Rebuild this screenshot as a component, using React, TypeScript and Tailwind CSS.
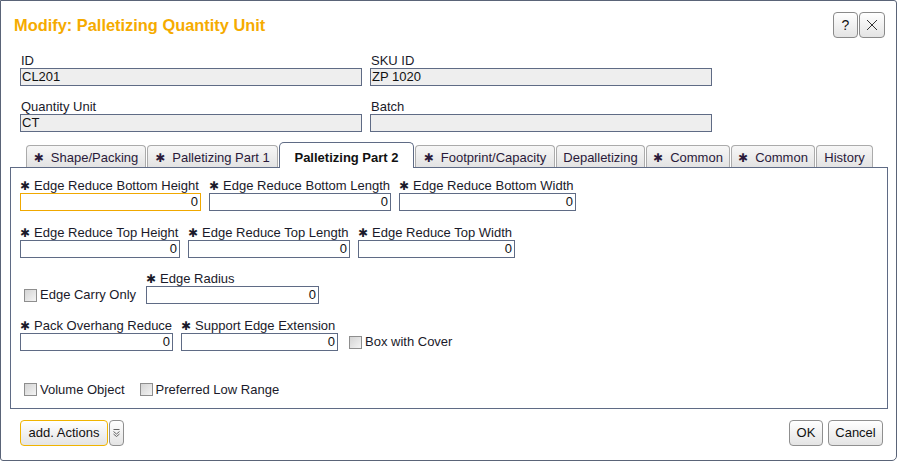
import React from "react";

const font = { fontFamily: '"Liberation Sans", Arial, sans-serif' };

const Star = ({ gap = "mr-[4px]" }: { gap?: string }) => (
  <span className={`inline-block text-[12px] leading-none ${gap}`} style={{ fontFamily: '"DejaVu Sans", sans-serif' }}>
    ✱
  </span>
);

const ReadField = ({ label, value }: { label: string; value: string }) => (
  <div className="flex flex-col w-[342px]">
    <div className="h-[15px] leading-[15px] pl-px text-[13px] text-[#1a1a2a]">{label}</div>
    <div className="h-[18px] border border-[#5f6b85] bg-[#eeeeee] text-[13px] leading-[16px] pl-px text-[#111]">
      {value}
    </div>
  </div>
);

const NumField = ({ label, w, focus }: { label: string; w: string; focus?: boolean }) => (
  <div className={`flex flex-col ${w}`}>
    <div className="h-[15px] leading-[15px] text-[13px] whitespace-nowrap text-[#1a1a2a]">
      <Star />
      {label}
    </div>
    <div
      className={`h-[18px] border ${focus ? "border-[#f0a800]" : "border-[#5f6b85]"} bg-white text-right pr-[2px] text-[13px] leading-[16px] text-[#111]`}
    >
      0
    </div>
  </div>
);

const Check = ({ label }: { label: string }) => (
  <div className="flex items-center gap-[3px] text-[13px] text-[#1a1a2a]">
    <span className="w-[13px] h-[13px] border border-[#8e8e8e] bg-gradient-to-br from-[#d4d4d4] to-[#f4f4f4]" />
    <span>{label}</span>
  </div>
);

const tabs = [
  { label: "Shape/Packing", star: true, w: "w-[120px]" },
  { label: "Palletizing Part 1", star: true, w: "w-[131px]" },
  { label: "Palletizing Part 2", star: false, w: "w-[135px]", active: true },
  { label: "Footprint/Capacity", star: true, w: "w-[140px]" },
  { label: "Depalletizing", star: false, w: "w-[89px]" },
  { label: "Common", star: true, w: "w-[84px]" },
  { label: "Common", star: true, w: "w-[84px]" },
  { label: "History", star: false, w: "w-[57px]" },
];

const Btn = ({ children, cls }: { children: React.ReactNode; cls: string }) => (
  <div
    className={`h-[26px] flex items-center justify-center rounded-[4px] border bg-gradient-to-b from-white to-[#e4e4e4] text-[13px] text-[#111] ${cls}`}
  >
    {children}
  </div>
);

export default function App() {
  return (
    <div className="w-[897px] h-[462px] bg-white" style={font}>
      <div className="w-[897px] h-[461px] border border-[#5a6478] rounded-tr-[3px] rounded-br-[5px] rounded-bl-[3px] flex flex-col">
        {/* header */}
        <div className="flex items-center justify-between h-[26px] mt-[11px] pl-[13px] pr-[11px]">
          <div className="text-[16.4px] font-bold text-[#f5ab00]">Modify: Palletizing Quantity Unit</div>
          <div className="flex gap-px">
            <Btn cls="w-[25px] h-[25px] border-[#8a8a8a]">
              <span className="text-[14px]">?</span>
            </Btn>
            <Btn cls="w-[26px] h-[25px] border-[#8a8a8a]">
              <svg width="12" height="12" viewBox="0 0 12 12">
                <path d="M1 1 L11 11 M11 1 L1 11" stroke="#333" strokeWidth="1" />
              </svg>
            </Btn>
          </div>
        </div>

        {/* header fields */}
        <div className="flex flex-col gap-[13px] mt-[15px] pl-[19px]">
          <div className="flex gap-[8px]">
            <ReadField label="ID" value="CL201" />
            <ReadField label="SKU ID" value="ZP 1020" />
          </div>
          <div className="flex gap-[8px]">
            <ReadField label="Quantity Unit" value="CT" />
            <ReadField label="Batch" value="" />
          </div>
        </div>

        {/* tabs */}
        <div className="flex items-end gap-px h-[25px] mt-[10px] pl-[25px]">
          {tabs.map((t, i) =>
            t.active ? (
              <div
                key={i}
                className={`${t.w} h-[26px] -mb-px relative z-10 bg-white border border-b-0 border-[#5f6b85] rounded-t-[5px] flex items-center justify-center text-[13px] font-bold text-[#111] pt-[5px]`}
              >
                {t.label}
              </div>
            ) : (
              <div
                key={i}
                className={`${t.w} h-[22px] bg-gradient-to-b from-[#f7f7f7] to-[#e3e3e3] border border-b-0 border-[#ababab] rounded-t-[4px] flex items-center justify-center text-[13px] text-[#2a1a3a] whitespace-nowrap pt-[3px]`}
              >
                {t.star && <Star gap="mr-[7px]" />}
                {t.label}
              </div>
            )
          )}
        </div>

        {/* panel */}
        <div className="ml-[9px] w-[878px] h-[242px] border border-[#5f6b85] pt-[10px] pl-[9px] flex flex-col">
          <div className="flex gap-[8px]">
            <NumField label="Edge Reduce Bottom Height" w="w-[181px]" focus />
            <NumField label="Edge Reduce Bottom Length" w="w-[182px]" />
            <NumField label="Edge Reduce Bottom Width" w="w-[177px]" />
          </div>
          <div className="flex gap-[8px] mt-[14px]">
            <NumField label="Edge Reduce Top Height" w="w-[160px]" />
            <NumField label="Edge Reduce Top Length" w="w-[162px]" />
            <NumField label="Edge Reduce Top Width" w="w-[157px]" />
          </div>
          <div className="flex items-end mt-[13px]">
            <div className="w-[126px] pl-[4px] h-[18px] flex items-center">
              <Check label="Edge Carry Only" />
            </div>
            <NumField label="Edge Radius" w="w-[173px]" />
          </div>
          <div className="flex items-end gap-[8px] mt-[14px]">
            <NumField label="Pack Overhang Reduce" w="w-[153px]" />
            <NumField label="Support Edge Extension" w="w-[157px]" />
            <div className="h-[18px] flex items-center ml-[3px]">
              <Check label="Box with Cover" />
            </div>
          </div>
          <div className="flex items-center gap-[15px] mt-[29px] pl-[4px]">
            <Check label="Volume Object" />
            <Check label="Preferred Low Range" />
          </div>
        </div>

        {/* footer */}
        <div className="flex items-center justify-between mt-[11px] pl-[19px] pr-[13px]">
          <div className="flex items-center gap-px">
            <Btn cls="w-[88px] border-[#f0b400]">add. Actions</Btn>
            <Btn cls="w-[15px] h-[25px] border-[#8f8f8f]">
              <svg width="7" height="10" viewBox="0 0 7 10">
                <path d="M0.5 1.5 H6.5 M0.5 3.5 L3.5 6 L6.5 3.5 M0.5 6 L3.5 8.5 L6.5 6" stroke="#555" strokeWidth="0.9" fill="none" />
              </svg>
            </Btn>
          </div>
          <div className="flex gap-[5px]">
            <Btn cls="w-[34px] border-[#8f8f8f]">OK</Btn>
            <Btn cls="w-[55px] border-[#8f8f8f]">Cancel</Btn>
          </div>
        </div>
      </div>
    </div>
  );
}
